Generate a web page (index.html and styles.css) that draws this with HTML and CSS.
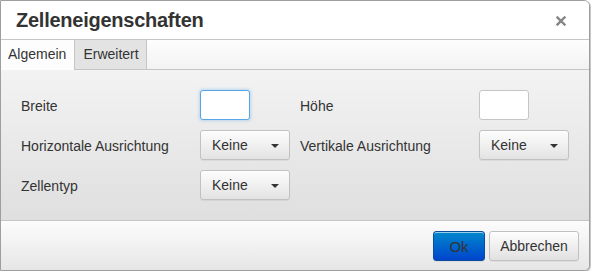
FILE: index.html
```html
<!DOCTYPE html>
<html lang="de">
<head>
<meta charset="utf-8">
<title>Zelleneigenschaften</title>
<link rel="stylesheet" href="styles.css">
</head>
<body>
<div class="dialog">
  <div class="head">
    <div class="title">Zelleneigenschaften</div>
    <button class="close" aria-label="Schließen">
      <svg width="10" height="10" viewBox="0 0 10 10"><path d="M1.5 1.5 L8.5 8.5 M8.5 1.5 L1.5 8.5" stroke="#858585" stroke-width="2.4" stroke-linecap="square"/></svg>
    </button>
  </div>
  <div class="tabs">
    <div class="tab active">Algemein</div>
    <div class="tab">Erweitert</div>
  </div>
  <div class="body">
    <div class="form">
      <label class="label">Breite</label>
      <div class="ctrl"><input class="text focus" type="text"></div>
      <label class="label">Höhe</label>
      <div class="ctrl"><input class="text" type="text"></div>

      <label class="label">Horizontale Ausrichtung</label>
      <div class="ctrl"><button class="select"><span>Keine</span><i class="caret"></i></button></div>
      <label class="label">Vertikale Ausrichtung</label>
      <div class="ctrl"><button class="select"><span>Keine</span><i class="caret"></i></button></div>

      <label class="label">Zellentyp</label>
      <div class="ctrl"><button class="select"><span>Keine</span><i class="caret"></i></button></div>
    </div>
  </div>
  <div class="foot">
    <button class="btn primary">Ok</button>
    <button class="btn">Abbrechen</button>
  </div>
</div>
</body>
</html>
```
FILE: styles.css
```css
* { box-sizing: border-box; }
html, body { margin: 0; padding: 0; background: #fff; }
body {
  font-family: "Liberation Sans", Arial, sans-serif;
  font-size: 14px;
  color: #333;
}
.dialog {
  width: 590px;
  height: 271px;
  border: 1px solid #9e9e9e;
  border-radius: 0 6px 6px 0;
  box-shadow: 1px 1px 1px rgba(0,0,0,0.25);
  display: flex;
  flex-direction: column;
  overflow: hidden;
  background: #fff;
}
.head {
  height: 39px;
  flex: none;
  border-bottom: 1px solid #c5c5c5;
  background: #fff;
  display: flex;
  align-items: center;
  justify-content: space-between;
  padding: 0 23px 0 15px;
}
.title {
  font-size: 20px;
  font-weight: bold;
  color: #333;
  line-height: 20px;
  padding-bottom: 1px;
  letter-spacing: -0.25px;
}
.close {
  border: 0;
  background: none;
  padding: 0;
  width: 10px;
  height: 10px;
  display: flex;
  margin-top: 2px;
}
.tabs {
  height: 30px;
  flex: none;
  display: flex;
  border-bottom: 1px solid #c5c5c5;
  background: linear-gradient(#fdfdfd, #f3f3f3);
}
.tab {
  height: 29px;
  padding: 0 7px 0 8px;
  line-height: 29px;
  border-right: 1px solid #c5c5c5;
  background: #e3e3e3;
  color: #333;
}
.tab.active {
  background: #fdfdfd;
  height: 30px;
  padding: 0 8px 0 7px;
}
.body {
  flex: 1;
  background: linear-gradient(#f3f3f3, #dfdfdf);
  padding: 20px 0 0 20px;
}
.form {
  display: grid;
  grid-template-columns: 179px 100px 179px 90px;
  grid-auto-rows: 30px;
  row-gap: 10px;
}
.label {
  display: flex;
  align-items: center;
  color: #333;
  padding-top: 1px;
}
.ctrl { display: flex; }
.text {
  width: 50px;
  height: 30px;
  border: 1px solid #c5c5c5;
  border-radius: 3px;
  background: #fff;
  font: inherit;
  margin: 0;
  outline: none;
}
.text.focus {
  border-color: #59a5e5;
  box-shadow: 0 0 3px 1px rgba(89,165,229,0.35);
}
.select {
  width: 90px;
  height: 30px;
  border: 1px solid #c1c1c1;
  border-radius: 3px;
  background: linear-gradient(#fdfdfd, #e3e3e3);
  font: inherit;
  color: #333;
  display: flex;
  align-items: center;
  justify-content: space-between;
  padding: 0 10px 0 11px;
  margin: 0;
  box-shadow: inset 0 1px 0 rgba(255,255,255,0.6), 0 1px 1px rgba(0,0,0,0.06);
}
.caret {
  width: 0;
  height: 0;
  border-left: 4px solid transparent;
  border-right: 4px solid transparent;
  border-top: 4px solid #333;
  margin-top: 1px;
}
.foot {
  height: 50px;
  flex: none;
  border-top: 1px solid #c5c5c5;
  background: linear-gradient(#fcfcfc, #e6e6e6);
  display: flex;
  justify-content: flex-end;
  align-items: flex-start;
  padding: 10px 10px 0 0;
  gap: 4px;
}
.btn {
  height: 30px;
  width: 90px;
  border: 1px solid #c1c1c1;
  border-radius: 3px;
  background: linear-gradient(#fdfdfd, #e1e1e1);
  font: inherit;
  color: #333;
  padding: 0;
  margin: 0;
  box-shadow: inset 0 1px 0 rgba(255,255,255,0.6), 0 1px 1px rgba(0,0,0,0.06);
}
.btn.primary {
  width: 52px;
  background: linear-gradient(#0088cc, #0044cc);
  border-color: #0b4c9b;
  color: #333;
  font-size: 15px;
}
```
